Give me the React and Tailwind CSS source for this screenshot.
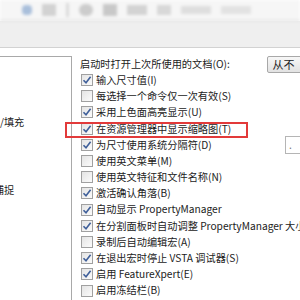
import React from "react";

const rows = [
  { label: "输入尺寸值(I)", on: true },
  { label: "每选择一个命令仅一次有效(S)", on: false },
  { label: "采用上色面高亮显示(U)", on: true },
  { label: "在资源管理器中显示缩略图(T)", on: true, mark: true },
  { label: "为尺寸使用系统分隔符(D)", on: true, sep: true },
  { label: "使用英文菜单(M)", on: false },
  { label: "使用英文特征和文件名称(N)", on: false },
  { label: "激活确认角落(B)", on: true },
  { label: "自动显示 PropertyManager", on: true },
  { label: "在分割面板时自动调整 PropertyManager 大小", on: true },
  { label: "录制后自动编辑宏(A)", on: false },
  { label: "在退出宏时停止 VSTA 调试器(S)", on: true },
  { label: "启用 FeatureXpert(E)", on: true },
  { label: "启用冻结栏(B)", on: false },
];

function Box({ on }) {
  return (
    <div className="w-[12px] h-[12px] shrink-0 border border-[#a0a0a0] bg-gradient-to-br from-[#e4e4e4] to-[#fbfbfb] flex items-center justify-center">
      {on && (
        <svg width="10" height="10" viewBox="0 0 10 10">
          <path d="M1.5 5.2 L4 7.8 L8.6 1.8" fill="none" stroke="#40609a" strokeWidth="1.6" />
        </svg>
      )}
    </div>
  );
}

export default function App() {
  return (
    <div className="w-[300px] h-[300px] overflow-hidden bg-white text-[#222] text-[10.2px] leading-none font-['Microsoft_YaHei','Noto_Sans_CJK_SC',sans-serif]">
      {/* blurred toolbar */}
      <div className="h-[21px] bg-[#f6f6f6] border-b border-[#d4d4d4] flex items-center gap-[10px] pl-[22px] blur-[1.5px]">
        <div className="w-[10px] h-[10px] bg-[#a9bfdb] rounded-sm" />
        <div className="w-[14px] h-[12px] bg-[#d2d2d2]" />
        <div className="w-[3px] h-[14px] bg-[#dadada]" />
        <div className="w-[14px] h-[12px] bg-[#cccccc] rounded-full" />
        <div className="w-[14px] h-[12px] bg-[#c8c8c8]" />
        <div className="w-[20px] h-[10px] bg-[#d3d3d3]" />
        <div className="w-[14px] h-[10px] bg-[#d8d8d8]" />
        <div className="w-[30px] h-[8px] bg-[#dedede]" />
        <div className="w-[30px] h-[8px] bg-[#e2e2e2]" />
      </div>
      <div className="h-[27px] bg-[#efefef] border-b border-[#d2d2d2]" />

      <div className="flex">
        {/* options tree, scrolled sideways */}
        <div className="w-[72px] shrink-0 pt-[8px]">
          <div className="h-[260px] border-t border-r border-[#a9a9a9] overflow-hidden">
            <div className="pt-[54px] flex flex-col whitespace-nowrap">
              {["区域剖面线/填充", "颜色", "草图", "几何关系/捕捉"].map((t) => (
                <div key={t} className="h-[22.7px] flex items-center -ml-[51px]">
                  {t}
                </div>
              ))}
            </div>
          </div>
        </div>

        {/* checkbox list */}
        <div className="flex-1 pl-[8px] whitespace-nowrap">
          <div className="mt-[8px] h-[16px] flex items-center">
            <span>启动时打开上次所使用的文档(O):</span>
            <div className="ml-auto -mr-[4px] h-[17px] w-[42px] border border-[#a8a8a8] rounded-[2px] bg-gradient-to-b from-[#f7f7f7] to-[#e2e2e2] flex items-center pl-[4px] text-[11px]">
              从不
            </div>
          </div>
          {rows.map((r) => (
            <div key={r.label} className="relative h-[16.2px] flex items-center gap-[3px] pl-[1px]">
              <Box on={r.on} />
              <span>{r.label}</span>
              {r.sep && (
                <div className="absolute left-[205px] w-[20px] h-[18px] border border-[#b5b5b5] bg-white flex items-end pl-[3px] pb-[3px] text-[#777]">
                  .
                </div>
              )}
              {r.mark && (
                <div className="absolute -left-[15px] top-[1px] w-[183px] h-[16px] border-2 border-[#e23a3a]" />
              )}
            </div>
          ))}
        </div>
      </div>
    </div>
  );
}
